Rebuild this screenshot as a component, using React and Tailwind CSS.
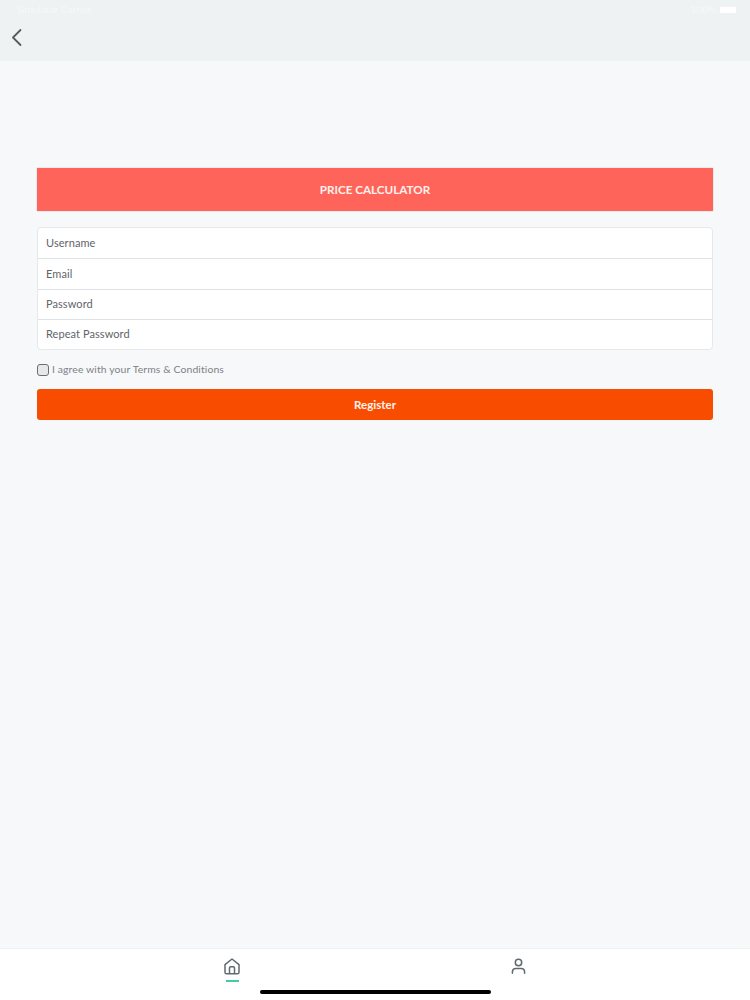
import React from 'react';

const fields = ['Username', 'Email', 'Password', 'Repeat Password'];

const App = () => {
  return (
    <div className="relative flex flex-col h-[1000px] w-[750px] overflow-hidden bg-[#f6f8fa] font-['Lato','Noto_Sans',sans-serif]">
      {/* top bar */}
      <div className="h-[61px] shrink-0 bg-[#eff2f3]">
        <div className="flex h-[17px] items-center justify-between pl-[17px] pr-[14px] pt-[2px] text-[10px] text-[#f5f7f8] blur-[0.4px]">
          <span>Simulator Carrier</span>
          <div className="flex items-center gap-1">
            <span>100%</span>
            <span className="h-[6px] w-[16px] bg-white"></span>
          </div>
        </div>
        <div className="pl-[10px] pt-[10px]">
          <svg width="14" height="20" viewBox="0 0 14 20" fill="none" stroke="#555b60" strokeWidth="1.8" strokeLinecap="round" strokeLinejoin="round">
            <path d="M10.5 3 L3 10.5 L10.5 18" />
          </svg>
        </div>
      </div>

      {/* form */}
      <div className="flex-1 px-[37px] pt-[107px]">
        <div className="flex h-[43px] items-center justify-center bg-[#ff645a] text-[11.7px] font-bold text-[#fff1ec] shadow-[0_0_1px_rgba(0,0,0,0.3)]">
          PRICE CALCULATOR
        </div>

        <div className="mt-4 rounded-[4px] border border-[#e6e8ea] bg-white">
          {fields.map((f, i) => (
            <div
              key={f}
              className={`flex h-[30.25px] items-center px-[8px] text-[11px] tracking-[0.07px] text-[#5f6469] ${i > 0 ? 'border-t border-[#dfe2e4]' : ''}`}
            >
              {f}
            </div>
          ))}
        </div>

        <div className="mt-[13px] flex h-[14px] items-center gap-[3px] text-[10.4px] tracking-[0.12px] text-[#7c8187]">
          <span className="h-[12px] w-[12px] rounded-[3px] border border-[#6a6f74] bg-[#e6e8eb]"></span>
          <span>I agree with your Terms &amp; Conditions</span>
        </div>

        <div className="mt-[12px] flex h-[31px] items-center justify-center rounded-[3px] bg-[#f84d00] text-[11.5px] font-bold text-[#fff3ec]">
          Register
        </div>
      </div>

      {/* bottom tabs */}
      <div className="flex h-[52px] shrink-0 border-t border-[#f0f1f3] bg-white pl-[224px] pt-[9px]">
        <div className="flex w-[16px] flex-col items-center">
          <svg width="16" height="17" viewBox="0 0 16 17" fill="none" stroke="#5f6a70" strokeWidth="1.5" strokeLinejoin="round">
            <path d="M1 6.6 L8 1 L15 6.6 V14.2 A1.6 1.6 0 0 1 13.4 15.8 H2.6 A1.6 1.6 0 0 1 1 14.2 Z" />
            <path d="M5.5 15.8 V10 A1.2 1.2 0 0 1 6.7 8.8 H9.3 A1.2 1.2 0 0 1 10.5 10 V15.8" />
          </svg>
          <span className="mt-[5px] h-[2px] w-[13px] shrink-0 bg-[#46c9a9]"></span>
        </div>
        <div className="ml-[271px]">
          <svg width="15" height="17" viewBox="0 0 15 17" fill="none" stroke="#5f6a70" strokeWidth="1.5" strokeLinecap="round">
            <circle cx="7.5" cy="4.5" r="3.2" />
            <path d="M1.4 15.2 V13.8 A3.4 3.4 0 0 1 4.8 10.6 H10.2 A3.4 3.4 0 0 1 13.6 13.8 V15.2" />
          </svg>
        </div>
      </div>

      {/* home indicator */}
      <div className="absolute bottom-[6px] left-[260px] h-[4px] w-[231px] rounded-full bg-black"></div>
    </div>
  );
};

export default App;
